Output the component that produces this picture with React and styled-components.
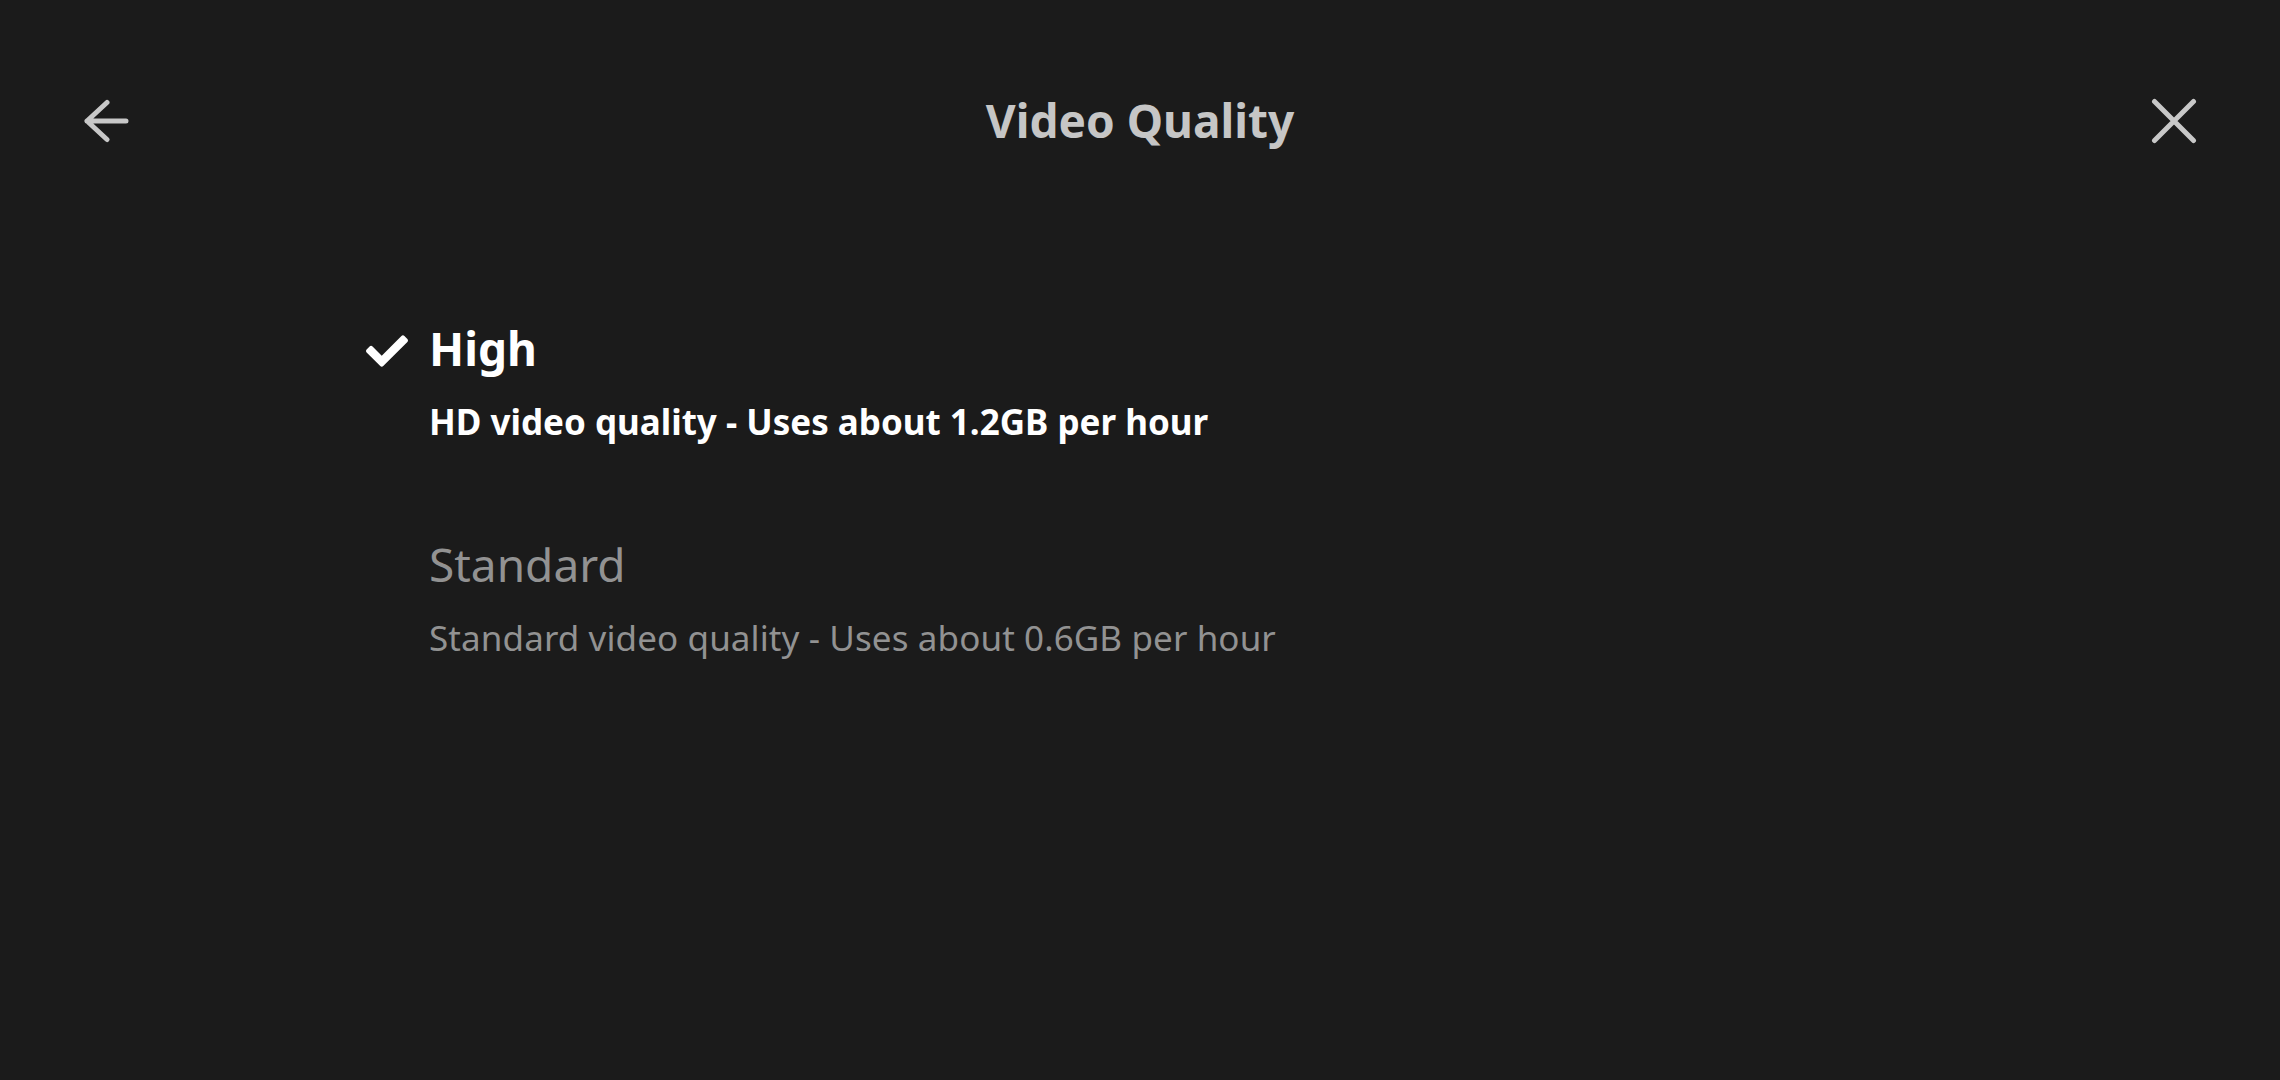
import React, { useState } from "react";
import styled, { createGlobalStyle } from "styled-components";
import { FaCheck } from "react-icons/fa";

const GlobalStyle = createGlobalStyle`
  html, body {
    margin: 0;
    padding: 0;
    background: #1b1b1b;
  }
  body {
    font-family: "Noto Sans", "Open Sans", sans-serif;
  }
`;

const Screen = styled.div`
  width: 2280px;
  height: 1080px;
  background: #1b1b1b;
  display: flex;
  flex-direction: column;
  overflow: hidden;
`;

const Header = styled.header`
  height: 242px;
  display: grid;
  grid-template-columns: 1fr auto 1fr;
  align-items: center;
  padding: 0 83px;
  box-sizing: border-box;
`;

const IconButton = styled.button`
  background: none;
  border: none;
  padding: 0;
  width: 46px;
  height: 46px;
  display: flex;
  align-items: center;
  justify-content: center;
  color: #c8c8c8;
  cursor: pointer;
  justify-self: ${(p) => (p.$end ? "end" : "start")};
`;

const Title = styled.h1`
  margin: 0;
  font-size: 46px;
  line-height: 56px;
  font-weight: 700;
  color: #c6c6c6;
  transform: translateY(-1px);
`;

const OptionList = styled.ul`
  list-style: none;
  margin: 0;
  padding: 78px 0 0 366px;
  display: flex;
  flex-direction: column;
  gap: 91px;
`;

const Option = styled.li`
  display: grid;
  grid-template-columns: 63px auto;
  grid-template-rows: auto auto;
  row-gap: 23px;
  cursor: pointer;
`;

const CheckSlot = styled.span`
  grid-row: 1;
  grid-column: 1;
  display: flex;
  align-items: center;
  color: #ffffff;
  padding-top: 5px;
`;

const OptionName = styled.span`
  grid-row: 1;
  grid-column: 2;
  font-size: 46px;
  line-height: 56px;
  font-weight: ${(p) => (p.$active ? 700 : 400)};
  color: ${(p) => (p.$active ? "#ffffff" : "#929292")};
`;

const OptionNote = styled.span`
  grid-row: 2;
  grid-column: 2;
  font-size: 35px;
  line-height: 46px;
  font-weight: ${(p) => (p.$active ? 700 : 400)};
  color: ${(p) => (p.$active ? "#ffffff" : "#929292")};
  letter-spacing: ${(p) => (p.$active ? "0" : "0.1px")};
`;

const BackArrow = () => (
  <svg width="46" height="44" viewBox="0 0 46 44" fill="none">
    <path
      d="M4 22H43M4 22L24 3.5M4 22L24 40.5"
      stroke="currentColor"
      strokeWidth="5"
      strokeLinecap="round"
      strokeLinejoin="round"
    />
  </svg>
);

const CloseCross = () => (
  <svg width="46" height="46" viewBox="0 0 46 46" fill="none">
    <path
      d="M3.5 3.5L42.5 42.5M42.5 3.5L3.5 42.5"
      stroke="currentColor"
      strokeWidth="5"
      strokeLinecap="round"
    />
  </svg>
);

const qualities = [
  { id: "high", name: "High", note: "HD video quality - Uses about 1.2GB per hour" },
  { id: "standard", name: "Standard", note: "Standard video quality - Uses about 0.6GB per hour" },
];

export default function App() {
  const [selected, setSelected] = useState("high");

  return (
    <Screen>
      <GlobalStyle />
      <Header>
        <IconButton aria-label="Back">
          <BackArrow />
        </IconButton>
        <Title>Video Quality</Title>
        <IconButton $end aria-label="Close">
          <CloseCross />
        </IconButton>
      </Header>
      <OptionList>
        {qualities.map((q) => {
          const active = q.id === selected;
          return (
            <Option key={q.id} onClick={() => setSelected(q.id)}>
              {active && (
                <CheckSlot>
                  <FaCheck size={42} />
                </CheckSlot>
              )}
              <OptionName $active={active}>{q.name}</OptionName>
              <OptionNote $active={active}>{q.note}</OptionNote>
            </Option>
          );
        })}
      </OptionList>
    </Screen>
  );
}
